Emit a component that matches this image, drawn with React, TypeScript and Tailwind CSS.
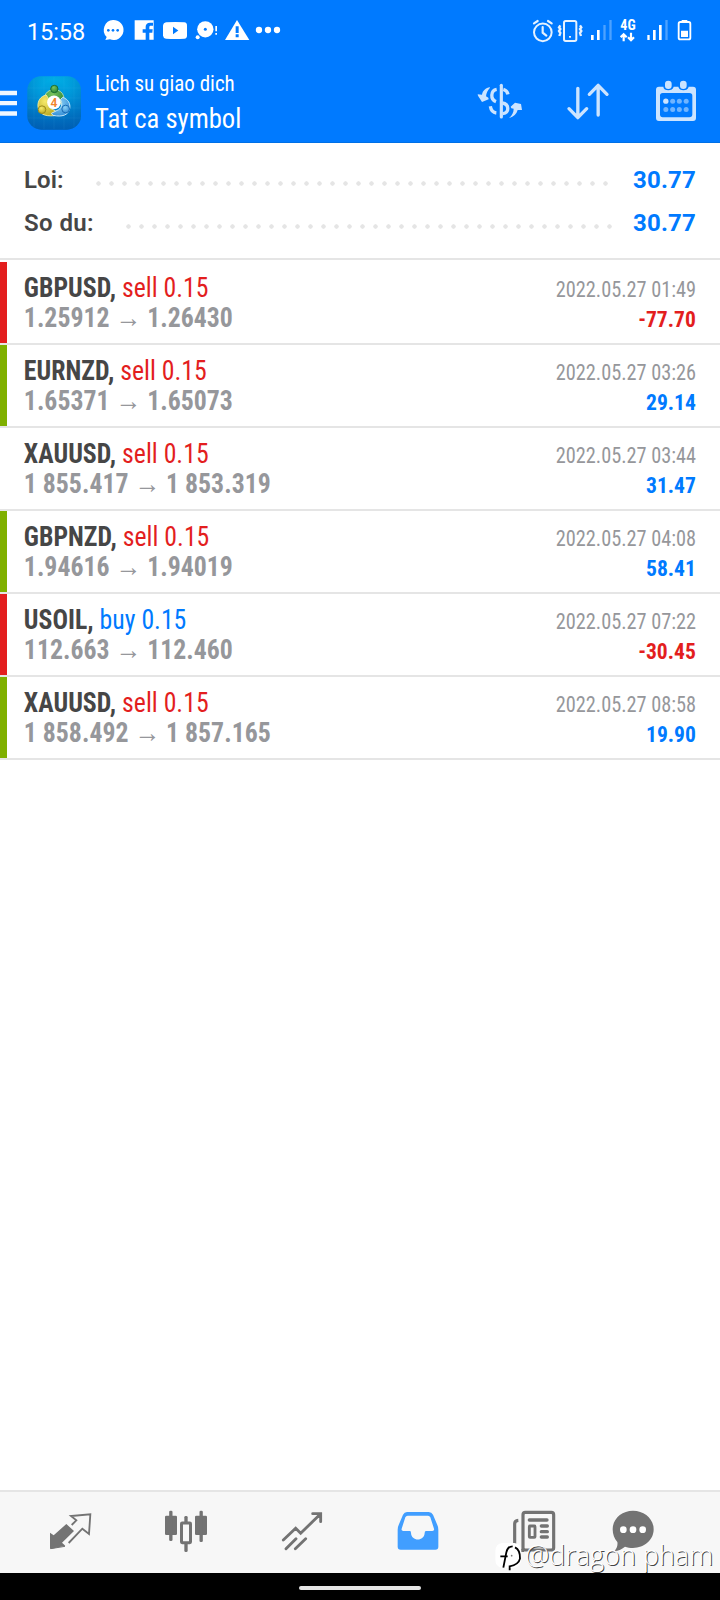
import type { ReactNode } from 'react';

type GlyphProps = { box: string; className: string; children: ReactNode };

function Glyph({ box, className, children }: GlyphProps) {
  return (
    <svg viewBox={box} className={`shrink-0 ${className}`} fill="none" aria-hidden="true">
      {children}
    </svg>
  );
}

function StatusBar() {
  return (
    <div className="flex h-[60px] items-center justify-between pr-[20px] pl-[27px] text-white">
      <div className="flex items-center">
        <span className="w-[73px] pt-[3px] text-[23.5px] leading-[30px] tracking-[-0.1px]">15:58</span>
        <Glyph box="301 48 90 84" className="h-[28px] w-[30px]">
          <path d="M340 60a30 30 0 1 1-9 58l-14 2 4-9a30 30 0 0 1 19-51z" fill="#fff" />
          <g fill="#007aff">
            <circle cx="326" cy="91" r="4" />
            <circle cx="340" cy="91" r="4" />
            <circle cx="354" cy="91" r="4" />
          </g>
        </Glyph>
        <Glyph box="391 48 90 84" className="h-[28px] w-[30px]">
          <path
            d="M405 61h57v58h-13V98h9l1-10h-10v-6c0-4 2-5 5-5h6v-9h-9c-9 0-13 5-13 12v8h-9v10h9v21h-33z"
            fill="#fff"
          />
        </Glyph>
        <Glyph box="480 48 96 84" className="h-[28px] w-[32px]">
          <path
            d="M498 67q28-2 55 0 8 1 8 9v31q0 8-8 9-27 2-55 0-8-1-9-9V76q1-8 9-9z"
            fill="#fff"
          />
          <path d="M519 80v23l16-11.500z" fill="#007aff" />
        </Glyph>
        <Glyph box="576 48 90 84" className="h-[28px] w-[30px]">
          <circle cx="616" cy="88" r="24.500" fill="#fff" />
          <circle cx="616" cy="88" r="4.500" fill="#007aff" />
          <circle cx="593" cy="112" r="6" fill="#fff" />
          <path d="M646 78h5v16h-5zM646 99h5v5h-5z" fill="#fff" />
        </Glyph>
        <Glyph box="666 48 93 84" className="h-[28px] w-[31px]">
          <path d="M711 60l37 60h-73z" fill="#fff" />
          <path d="M707 79h9v20h-9zM707 103h9v9h-9z" fill="#007aff" />
        </Glyph>
        <Glyph box="759 48 90 84" className="h-[28px] w-[30px]">
          <g fill="#fff">
            <circle cx="777" cy="90" r="9.500" />
            <circle cx="804" cy="90" r="9.500" />
            <circle cx="831" cy="90" r="9.500" />
          </g>
        </Glyph>
      </div>

      <div className="flex items-center">
        <Glyph box="210 48 75 84" className="h-[28px] w-[25px]">
          <g stroke="#e6f2ff" strokeWidth="6" strokeLinecap="round">
            <circle cx="248.500" cy="97" r="26.500" />
            <path d="M248 81v17l11 9M222 70l11-7M275 70l-11-7" strokeWidth="6.500" />
          </g>
        </Glyph>
        <Glyph box="285 48 90 84" className="h-[28px] w-[30px]">
          <g stroke="#e6f2ff" strokeWidth="6">
            <rect x="312" y="63" width="37" height="60" rx="5" />
            <path
              d="M301 76l-4 6 4 5-4 6 4 6-3 9M360 76l4 6-4 5 4 6-4 6 3 9"
              strokeWidth="7"
            />
          </g>
          <rect x="327" y="108" width="6" height="5" fill="#e6f2ff" />
        </Glyph>
        <Glyph box="375 48 90 84" className="h-[28px] w-[30px]">
          <path d="M393 105h8v15h-8zM411 90h8v30h-8z" fill="#fff" />
          <path d="M430 75h7v45h-7zM448 60h7v60h-7z" fill="#fff" fillOpacity="0.3" />
        </Glyph>
        <div className="flex w-[25px] flex-col items-center pl-px">
          <span className="font-['Roboto_Condensed',Roboto,sans-serif] text-[14px] leading-[13px] font-bold">4G</span>
          <Glyph box="480 96 48 29" className="h-[10px] w-[16px]">
            <g stroke="#fff" strokeWidth="6.500">
              <path d="M491 123v-20M482 111l9-9 9 9M513 98v20M504 111l9 9 9-9" />
            </g>
          </Glyph>
        </div>
        <Glyph box="540 48 96 84" className="h-[28px] w-[32px]">
          <path d="M562 105h7v15h-7zM579 90h8v30h-8zM597 75h8v45h-8z" fill="#fff" />
          <path d="M616 60h7v60h-7z" fill="#fff" fillOpacity="0.3" />
        </Glyph>
        <Glyph box="636 48 84 84" className="h-[28px] w-[28px]">
          <rect x="656" y="66" width="35" height="52" rx="5" stroke="#fff" strokeWidth="5.500" />
          <path d="M665 60h17v6h-17zM663 92h21v19h-21z" fill="#fff" />
        </Glyph>
      </div>
    </div>
  );
}

function AppLogo() {
  return (
    <Glyph box="81 226 162 162" className="mt-[15.500px] ml-[10px] h-[54px] w-[54px]">
      <defs>
        <linearGradient id="tile" x1="0" y1="0" x2="0" y2="1">
          <stop offset="0" stopColor="#00b0e6" />
          <stop offset="0.5" stopColor="#008cd4" />
          <stop offset="1" stopColor="#0064b8" />
        </linearGradient>
        <radialGradient id="edge" cx="0.5" cy="0.35" r="0.7">
          <stop offset="0.4" stopColor="#0058ac" stopOpacity="0" />
          <stop offset="1" stopColor="#0058ac" stopOpacity="0.45" />
        </radialGradient>
        <radialGradient id="green" cx="0.4" cy="0.3" r="0.8">
          <stop offset="0" stopColor="#7cc45c" />
          <stop offset="1" stopColor="#207f34" />
        </radialGradient>
        <radialGradient id="yellow" cx="0.4" cy="0.3" r="0.8">
          <stop offset="0" stopColor="#f6ea6c" />
          <stop offset="1" stopColor="#b5a41c" />
        </radialGradient>
        <radialGradient id="blue" cx="0.4" cy="0.3" r="0.8">
          <stop offset="0" stopColor="#8cd2f6" />
          <stop offset="1" stopColor="#2c88d4" />
        </radialGradient>
      </defs>
      <rect x="82" y="227" width="161" height="160" rx="42" fill="url(#tile)" />
      <rect x="82" y="227" width="161" height="160" rx="42" fill="url(#edge)" />
      <path
        d="M102 234v146M132 228v158M162 228v158M192 228v158M222 234v146M83 262h159M83 292h159M83 322h159M83 352h159"
        stroke="#5cc8f0"
        strokeOpacity="0.13"
        strokeWidth="2"
      />
      <g strokeWidth="3">
        <path
          d="M136 306c-8-20 4-39 26-39s34 16 29 40l-14 4-14-16-14 16z"
          fill="url(#green)"
          stroke="#c8e8b0"
          strokeOpacity="0.8"
        />
        <path
          d="M139 283c-17 3-27 18-25 36 3 20 19 29 49 26l4-14-16-8c-8-6-8-18-4-26z"
          fill="url(#yellow)"
          stroke="#fff6a8"
          strokeOpacity="0.8"
        />
        <path
          d="M188 290c17 6 24 19 21 34-4 19-22 26-50 20l-5-6 22-11c10-7 12-20 5-30z"
          fill="url(#blue)"
          stroke="#d4eefc"
          strokeOpacity="0.9"
        />
        <circle cx="163" cy="265" r="11" fill="url(#green)" stroke="#1b6e34" />
        <circle cx="126" cy="327" r="11.500" fill="url(#yellow)" stroke="#9c8c1c" />
        <circle cx="197" cy="325" r="11.500" fill="url(#blue)" stroke="#1c6cb4" />
      </g>
      <circle cx="162" cy="305" r="20.500" fill="#fff" />
      <text
        x="162"
        y="318"
        textAnchor="middle"
        fontSize="36"
        fontWeight="600"
        fontFamily="Roboto, sans-serif"
        fill="#f0842c"
      >
        4
      </text>
    </Glyph>
  );
}

function TitleBar() {
  return (
    <div className="flex h-[83px] items-start border-b border-[#0070e6] text-white">
      <Glyph box="0 266 51 84" className="mt-[29px] h-[28px] w-[17px]">
        <path d="M0 271h51v14H0zM0 302h51v13H0zM0 333h51v13H0z" fill="#f0f7ff" />
      </Glyph>
      <AppLogo />
      <div className="flex flex-1 flex-col pt-[8px] pl-[13.500px] font-['Roboto_Condensed',Roboto,sans-serif]">
        <span className="origin-left scale-x-[0.955] text-[22px] leading-[31px]">Lich su giao dich</span>
        <span className="origin-left scale-x-[0.952] text-[28px] leading-[39px]">Tat ca symbol</span>
      </div>
      <div className="flex pt-[17px] pr-[22px]">
        <Glyph box="46 231 150 150" className="h-[50px] w-[50px]">
          <g fill="#cce4ff">
            <path d="M91 262c-13 2-22 10-24 22l-13-1 1 4 12 19 20-8-1-5-7-4c1-10 5-18 12-26z" />
            <path d="M149 354c13-4 22-12 25-24l13 0-3-18-18-4-13 12 2 5 7 1c0 11-5 20-13 27z" />
          </g>
          <g stroke="#cce4ff">
            <path d="M125 256v95" strokeWidth="9.500" strokeLinecap="round" />
            <path d="M111 268c-18 3-20 30-2 37M92 319c2 13 9 19 18 20" strokeWidth="10" />
            <path d="M131 268c7 2 12 6 14 15M128 309c21 3 22 29 1 32" strokeWidth="10" />
          </g>
        </Glyph>
        <Glyph box="315 231 138 150" className="ml-[40px] h-[50px] w-[46px]">
          <g stroke="#cce4ff" strokeWidth="10" strokeLinecap="round" strokeLinejoin="round">
            <path d="M353.500 265v86M327 326l26.500 27 26.500-27M414.500 345v-87M388 283l26.500-27 26.500 27" />
          </g>
        </Glyph>
        <Glyph box="582 231 132 150" className="ml-[43px] h-[50px] w-[44px]">
          <path
            fillRule="evenodd"
            d="M597 260h13c0 14 29 14 31 0h14c2 14 29 14 31 0h13q9 0 9 9v85q0 9-9 9h-102q-9 0-9-9v-85q0-9 9-9zM608 279q-8 0-8 8v56q0 9 8 9h80q9 0 9-9v-56q0-8-9-8z"
            fill="#cce4ff"
          />
          <path
            d="M625 242q10 0 10 9v7q0 9-10 9t-10-9v-7q0-9 10-9zM670 242q10 0 10 9v7q0 9-10 9t-10-9v-7q0-9 10-9z"
            fill="#cce4ff"
          />
          <circle cx="617.500" cy="303.500" r="8" fill="#cce4ff" />
          <g fill="#70b4ff">
            <circle cx="638" cy="303.500" r="7.500" />
            <circle cx="658" cy="303.500" r="7.500" />
            <circle cx="678.500" cy="303.500" r="7.500" />
            <circle cx="617.500" cy="328.500" r="7.500" />
            <circle cx="638" cy="328.500" r="7.500" />
            <circle cx="658" cy="328.500" r="7.500" />
            <circle cx="678.500" cy="328.500" r="7.500" />
          </g>
        </Glyph>
      </div>
    </div>
  );
}

function Summary() {
  const dots =
    'mt-[5px] h-[5px] bg-[radial-gradient(circle,#e5e5e5_1.9px,transparent_2.5px)] bg-[length:13px_5px] bg-repeat-x';
  return (
    <div className="flex h-[117px] flex-col border-b-2 border-[#e5e5e5] pt-[16px] pr-[24px] pl-[24px] text-[24px] leading-[43px]">
      <div className="flex items-center">
        <span className="w-[68px] font-semibold tracking-[0.1px] text-[#464646]">Loi:</span>
        <span className={`${dots} w-[520px]`} />
        <span className="flex-1 text-right font-bold tracking-[0.2px] text-[#007aff]">30.77</span>
      </div>
      <div className="flex items-center">
        <span className="w-[98px] font-semibold tracking-[0.4px] text-[#464646]">So du:</span>
        <span className={`${dots} w-[494px]`} />
        <span className="flex-1 text-right font-bold tracking-[0.2px] text-[#007aff]">30.77</span>
      </div>
    </div>
  );
}

type Deal = {
  symbol: string;
  side: 'sell' | 'buy';
  open: string;
  close: string;
  time: string;
  profit: string;
  mark: 'red' | 'green' | 'none';
};

const deals: Deal[] = [
  { symbol: 'GBPUSD', side: 'sell', open: '1.25912', close: '1.26430', time: '01:49', profit: '-77.70', mark: 'red' },
  { symbol: 'EURNZD', side: 'sell', open: '1.65371', close: '1.65073', time: '03:26', profit: '29.14', mark: 'green' },
  { symbol: 'XAUUSD', side: 'sell', open: '1 855.417', close: '1 853.319', time: '03:44', profit: '31.47', mark: 'none' },
  { symbol: 'GBPNZD', side: 'sell', open: '1.94616', close: '1.94019', time: '04:08', profit: '58.41', mark: 'green' },
  { symbol: 'USOIL', side: 'buy', open: '112.663', close: '112.460', time: '07:22', profit: '-30.45', mark: 'red' },
  { symbol: 'XAUUSD', side: 'sell', open: '1 858.492', close: '1 857.165', time: '08:58', profit: '19.90', mark: 'green' },
];

const markColor = { red: 'bg-[#e31e1e]', green: 'bg-[#7fb000]', none: 'bg-white' };

function DealRow({ deal }: { deal: Deal }) {
  return (
    <li className="flex h-[83px] border-b-2 border-[#e5e5e5] leading-[30px]">
      <span className={`w-[7px] shrink-0 ${markColor[deal.mark]}`} />
      <div className="flex flex-1 origin-left scale-x-[0.937] flex-col pt-[11px] pl-[18px] text-[27.5px]">
        <span className="font-bold text-[#464646]">
          {deal.symbol},{' '}
          <span className={`font-normal ${deal.side === 'sell' ? 'text-[#e31e1e]' : 'text-[#007aff]'}`}>
            {deal.side} 0.15
          </span>
        </span>
        <span className="font-bold text-[#96979b]">
          {deal.open} → {deal.close}
        </span>
      </div>
      <div className="flex flex-col items-end pt-[13px] pr-[24px] text-[22px]">
        <span className="origin-right scale-x-[0.923] text-[#96979b]">2022.05.27 {deal.time}</span>
        <span
          className={`origin-right scale-x-[0.98] font-bold ${deal.profit.startsWith('-') ? 'text-[#e31e1e]' : 'text-[#007aff]'}`}
        >
          {deal.profit}
        </span>
      </div>
    </li>
  );
}

function NavBar() {
  return (
    <nav className="flex h-[83px] border-t-2 border-[#e5e5e5] bg-[#f7f7f7] pt-[16px] pl-[45px]">
      <Glyph box="135 84 150 141" className="h-[47px] w-[50px]">
        <path d="M150 158l11 8 38-34 23 21-36 35 10 9-44 10q-2 0-2-3z" fill="#737373" />
        <path d="M152 206l43-7" stroke="#737373" strokeWidth="3" />
        <path d="M206 189l41-43 20 16 4-59-58 5 16 13-14 14" stroke="#737373" strokeWidth="5.500" />
      </Glyph>
      <Glyph box="483 84 150 141" className="ml-[66px] h-[47px] w-[50px]">
        <g fill="#737373">
          <rect x="495" y="107" width="36" height="58" rx="4" />
          <rect x="507.500" y="92" width="10" height="91" rx="4" />
          <rect x="585" y="107" width="36" height="58" rx="4" />
          <rect x="598.500" y="92" width="10" height="94" rx="4" />
          <rect x="553" y="108" width="10" height="22" rx="4" />
          <rect x="553" y="186" width="10" height="30" rx="4" />
        </g>
        <rect x="544.500" y="129" width="27" height="59" rx="2" stroke="#737373" strokeWidth="9" />
      </Glyph>
      <Glyph box="831 84 150 141" className="ml-[66px] h-[47px] w-[50px]">
        <g stroke="#737373" strokeWidth="8.500" strokeLinecap="round">
          <path d="M850 180l37-35 15 15 60-59M938 101h24v24M858 206l30-30M886 206l31-30" />
        </g>
      </Glyph>
      <Glyph box="99 84 150 141" className="ml-[66px] h-[47px] w-[50px]">
        <path
          fillRule="evenodd"
          d="M141 96h65q9 0 13 8l13 31q3 6 3 14v51q0 9-9 9h-104q-9 0-9-9v-51q0-8 3-14l13-31q4-8 12-8zM143 107q-5 0-7 5l-11 34q-2 7 5 7h20q3 0 3 6c1 26 40 26 41 0q0-6 4-6h19q7 0 5-7l-11-34q-2-5-7-5z"
          fill="#419eff"
        />
      </Glyph>
      <Glyph box="447 84 150 141" className="ml-[66px] h-[47px] w-[50px]">
        <rect x="489" y="97" width="92" height="113" rx="7" stroke="#737373" strokeWidth="9.500" />
        <path d="M475 121q-11 1-11 10v68q0 12 12 12h16" stroke="#737373" strokeWidth="9.500" />
        <rect x="508" y="138" width="17" height="34" rx="2" stroke="#737373" strokeWidth="8.500" />
        <path
          d="M508 120h53M544 138h18M544 155h18M544 171h18"
          stroke="#737373"
          strokeWidth="10"
          strokeLinecap="round"
        />
      </Glyph>
      <Glyph box="744 84 150 141" className="ml-[49px] h-[47px] w-[50px]">
        <path
          d="M819 92c34 0 62 24 62 56s-28 56-62 56c-9 0-17-2-24-4-8 7-19 12-32 14 7-9 11-18 9-28-9-10-14-23-14-38 0-32 27-56 61-56z"
          fill="#737373"
        />
        <g fill="#fff">
          <circle cx="790" cy="149" r="10" />
          <circle cx="819" cy="149" r="10" />
          <circle cx="848" cy="149" r="10" />
        </g>
      </Glyph>
    </nav>
  );
}

function Watermark() {
  return (
    <div className="absolute right-[7px] bottom-[29px] flex items-start">
      <Glyph box="408 184 90 90" className="h-[30px] w-[30px]">
        <path d="M430 190h36q22 2 21 27v20q0 24-22 28h-34q-22-2-22-26v-24q1-24 21-25z" fill="#fff" />
        <path d="M461 200q-15 0-19 18l-9 46M424 230h22" stroke="#000" strokeWidth="5.500" />
        <path d="M468 203q16 8 15 34-4 18-31 23v12" stroke="#000" strokeWidth="5.500" />
        <circle cx="458" cy="228" r="2.500" fill="#777" />
      </Glyph>
      <span className="font-['Open_Sans',sans-serif] text-[27px] leading-[27px] font-light whitespace-nowrap text-white [text-shadow:1px_1px_0_#444]">
        @dragon pham
      </span>
    </div>
  );
}

export default function App() {
  return (
    <div className="flex h-[1600px] w-[720px] flex-col overflow-hidden bg-white font-[Roboto,sans-serif]">
      <header className="bg-[#007aff]">
        <StatusBar />
        <TitleBar />
      </header>
      <Summary />
      <ul className="mt-[2px] flex-1 font-['Roboto_Condensed',Roboto,sans-serif]">
        {deals.map((deal) => (
          <DealRow key={deal.time} deal={deal} />
        ))}
      </ul>
      <div className="relative">
        <NavBar />
        <div className="flex h-[27px] justify-center bg-black pt-[13px]">
          <span className="h-[4px] w-[122px] rounded-full bg-[#e5e5e5]" />
        </div>
        <Watermark />
      </div>
    </div>
  );
}
